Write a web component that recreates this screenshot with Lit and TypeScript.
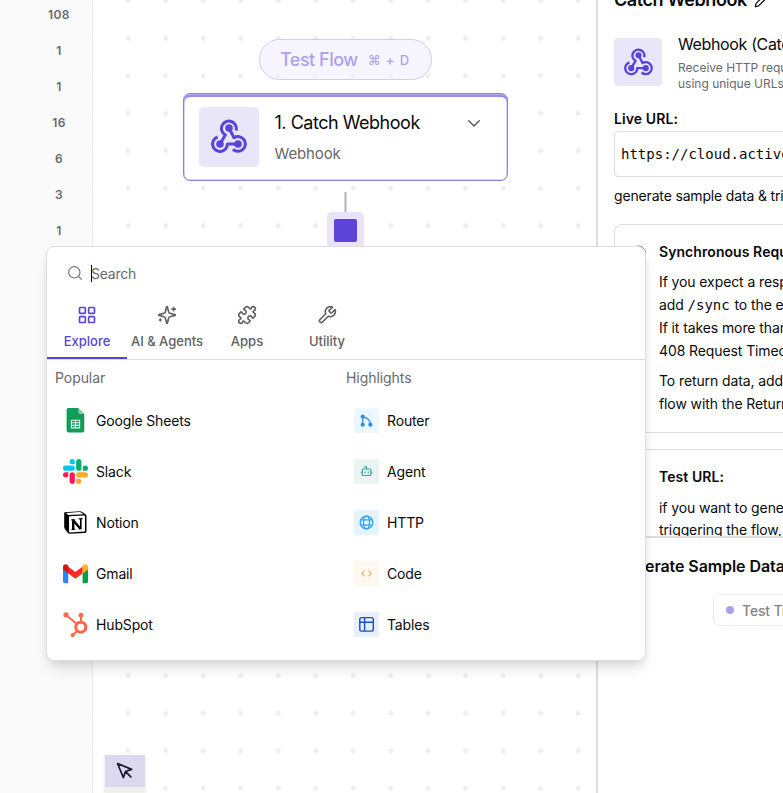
import { LitElement, html, css, svg } from "lit";
import { customElement } from "lit/decorators.js";

const webhookMark = html`<svg class="webhook" viewBox="0 0 36 36" fill="none" stroke="#5c43d9" stroke-width="3">
  <path d="M9 25L14.3 15.9A7.4 7.4 0 1 1 25 11.5" stroke-linejoin="round" />
  <path d="M27 25H16.4A7.4 7.4 0 1 1 6.7 18" stroke-linejoin="round" />
  <path d="M18 9L23 18.7A7.4 7.4 0 1 1 21.9 30.4" stroke-linejoin="round" />
  <g fill="#5c43d9" stroke="none"><circle cx="18" cy="9" r="3.8" /><circle cx="9" cy="25" r="3.8" /><circle cx="27" cy="25" r="3.8" /></g>
</svg>`;

const line = (cls: string, body: unknown) => html`<svg class=${cls} viewBox="0 0 24 24" fill="none"
  stroke="currentColor" stroke-width="2" stroke-linecap="round" stroke-linejoin="round">${body}</svg>`;

const tabs = [
  { label: "Explore", active: true, icon: svg`<rect width="7" height="7" x="3" y="3" rx="1"/><rect width="7" height="7" x="14" y="3" rx="1"/><rect width="7" height="7" x="14" y="14" rx="1"/><rect width="7" height="7" x="3" y="14" rx="1"/>` },
  { label: "AI & Agents", active: false, icon: svg`<path d="M9.937 15.5A2 2 0 0 0 8.5 14.063l-6.135-1.582a.5.5 0 0 1 0-.962L8.5 9.936A2 2 0 0 0 9.937 8.5l1.582-6.135a.5.5 0 0 1 .963 0L14.063 8.5A2 2 0 0 0 15.5 9.937l6.135 1.581a.5.5 0 0 1 0 .964L15.5 14.063a2 2 0 0 0-1.437 1.437l-1.582 6.135a.5.5 0 0 1-.963 0z"/><path d="M20 3v4M22 5h-4M4 17v2M5 18H3"/>` },
  { label: "Apps", active: false, icon: svg`<path d="M15.39 4.39a1 1 0 0 0 1.68-.474 2.5 2.5 0 1 1 3.014 3.015 1 1 0 0 0-.474 1.68l1.683 1.682a2.414 2.414 0 0 1 0 3.414L19.61 15.39a1 1 0 0 1-1.68-.474 2.5 2.5 0 1 0-3.014 3.015 1 1 0 0 1 .474 1.68l-1.683 1.682a2.414 2.414 0 0 1-3.414 0L8.61 19.61a1 1 0 0 0-1.68.474 2.5 2.5 0 1 1-3.014-3.015 1 1 0 0 0 .474-1.68l-1.683-1.682a2.414 2.414 0 0 1 0-3.414L4.39 8.61a1 1 0 0 1 1.68.474 2.5 2.5 0 1 0 3.014-3.015 1 1 0 0 1-.474-1.68l1.683-1.682a2.414 2.414 0 0 1 3.414 0z"/>` },
  { label: "Utility", active: false, icon: svg`<path d="M14.7 6.3a1 1 0 0 0 0 1.4l1.6 1.6a1 1 0 0 0 1.4 0l3.77-3.77a6 6 0 0 1-7.94 7.94l-6.91 6.91a2.12 2.12 0 0 1-3-3l6.91-6.91a6 6 0 0 1 7.94-7.94l-3.76 3.76z"/>` },
];

const brand = (body: unknown) => html`<svg class="logo" viewBox="0 0 25 25">${body}</svg>`;

const popular = [
  { name: "Google Sheets", icon: brand(svg`<path fill="#0f9d58" d="M5.4 0h9.9l6 6v16.8a1.8 1.8 0 0 1-1.8 1.8H5.4a1.8 1.8 0 0 1-1.8-1.8V1.8A1.8 1.8 0 0 1 5.4 0z"/><path fill="#87ceac" d="M15.3 0l6 6h-4.2a1.8 1.8 0 0 1-1.8-1.8z"/><path fill="none" stroke="#f1f1f1" stroke-width="1.1" d="M8.4 12.3h8.2v7.6H8.4zM8.4 14.8h8.2M8.4 17.4h8.2M12.5 12.3v7.6"/>`) },
  { name: "Slack", icon: brand(svg`<g transform="scale(1.0417)"><path fill="#ff1a55" d="M5.042 15.165a2.528 2.528 0 0 1-2.52 2.523A2.528 2.528 0 0 1 0 15.165a2.527 2.527 0 0 1 2.522-2.52h2.52zM6.313 15.165a2.527 2.527 0 0 1 2.521-2.52 2.527 2.527 0 0 1 2.521 2.52v6.313A2.528 2.528 0 0 1 8.834 24a2.528 2.528 0 0 1-2.521-2.522z"/><path fill="#0fc3f3" d="M8.834 5.042a2.528 2.528 0 0 1-2.521-2.52A2.528 2.528 0 0 1 8.834 0a2.528 2.528 0 0 1 2.521 2.522v2.52zM8.834 6.313a2.528 2.528 0 0 1 2.521 2.521 2.528 2.528 0 0 1-2.521 2.521H2.522A2.528 2.528 0 0 1 0 8.834a2.528 2.528 0 0 1 2.522-2.521z"/><path fill="#0aac70" d="M18.956 8.834a2.528 2.528 0 0 1 2.522-2.521A2.528 2.528 0 0 1 24 8.834a2.528 2.528 0 0 1-2.522 2.521h-2.522zM17.688 8.834a2.528 2.528 0 0 1-2.523 2.521 2.527 2.527 0 0 1-2.52-2.521V2.522A2.527 2.527 0 0 1 15.165 0a2.528 2.528 0 0 1 2.523 2.522z"/><path fill="#ffa726" d="M15.165 18.956a2.528 2.528 0 0 1 2.523 2.522A2.528 2.528 0 0 1 15.165 24a2.527 2.527 0 0 1-2.52-2.522v-2.522zM15.165 17.688a2.527 2.527 0 0 1-2.52-2.523 2.526 2.526 0 0 1 2.52-2.52h6.313A2.527 2.527 0 0 1 24 15.165a2.528 2.528 0 0 1-2.522 2.523z"/></g>`) },
  { name: "Notion", icon: brand(svg`<path fill="#000" d="M1.5 2.3L17 1.2q1.2 0 1.9.5l3.6 2.6q1 .7 1 1.7v15.2q0 1.6-1.5 1.7L6.7 23.8q-1.1 0-1.8-.8l-3-4q-.7-.8-.7-2V3.5q0-1 .3-1.2z"/><path fill="#fff" d="M3.3 3L16.6 2.1q1 0 1.5.4l2.4 1.7L6 5.1q-.8 0-1.4-.5zM6 7.2q0-.9.9-1L21 5.4q1 0 1 .9v14.4q0 .8-.9.9l-14 .8q-1 0-1-.9z"/><path fill="none" stroke="#000" stroke-width="2.4" d="M10.2 10.2v9.2M10 10.1l7.6 9"/><path fill="none" stroke="#000" stroke-width="1.6" d="M17.8 8.8v10.4"/><path stroke="#000" stroke-width="1.2" d="M8.3 9.9l3.3-.2M15.7 8.8l3.8-.2M8.5 19.5l3.6-.2"/>`) },
  { name: "Gmail", icon: brand(svg`<path fill="#2684fc" d="M0 8l5.2 4v10.2H1.7A1.7 1.7 0 0 1 0 20.5z"/><path fill="#00a046" d="M25 8l-5.4 4v10.2h3.7a1.7 1.7 0 0 0 1.7-1.7z"/><path fill="#ff2a26" d="M5 5.5l7.4 5.6 7.3-5.6v6.8l-7.3 5.5L5 12.3z"/><path fill="#d1171b" d="M0 8.5V5.8C0 3.4 2.7 2.4 4.3 3.8l1 .8v7.8z"/><path fill="#ffb41f" d="M25 8.5V5.8c0-2.4-2.7-3.4-4.3-2l-1.1.9v7.7z"/>`) },
  { name: "HubSpot", icon: brand(svg`<g fill="none" stroke="#ff6849"><circle cx="17.8" cy="15.2" r="5" stroke-width="3.1"/><path stroke-width="2" d="M18 10V4M14 12L3 3M14.5 18.5l-4.5 4.5"/></g><g fill="#ff6849"><circle cx="3" cy="2.8" r="2.6"/><circle cx="18" cy="3.2" r="2.4"/><circle cx="9.7" cy="23" r="2.1"/></g>`) },
];

const highlights = [
  { name: "Router", icon: brand(svg`<rect width="25" height="25" rx="2" fill="#ecf8ff"/><path d="M8.7 8.7v8M8.7 9.3c4 0 7.7 2.5 7.7 7.3" fill="none" stroke="#4a98f5" stroke-width="1.4"/><g fill="#3288f2"><circle cx="8.7" cy="8.6" r="2.1"/><circle cx="8.7" cy="16.7" r="2.1"/><circle cx="16.4" cy="16.7" r="2.1"/></g><path d="M14.5 7.2q3.5-.6 3.6 3" fill="none" stroke="#c5e2ff" stroke-width=".7" stroke-dasharray="1 1"/>`) },
  { name: "Agent", icon: brand(svg`<rect width="25" height="25" rx="1.5" fill="#eaf5f3"/><g transform="translate(6.1 5.7) scale(.54)" fill="none" stroke="#38aa99" stroke-width="2.2" stroke-linecap="round" stroke-linejoin="round"><path d="M12 8V4H8"/><rect width="16" height="12" x="4" y="8" rx="2"/><path d="M2 14h2M20 14h2M15 13v2M9 13v2"/></g>`) },
  { name: "HTTP", icon: brand(svg`<rect width="25" height="25" fill="#e6f4ff"/><g fill="none" stroke="#27a5fb" stroke-width="1.3"><circle cx="12.5" cy="12.5" r="6.3"/><ellipse cx="12.5" cy="12.5" rx="3" ry="6.3"/><path d="M7 9.8h11M7 15.2h11"/></g>`) },
  { name: "Code", icon: brand(svg`<rect width="25" height="25" rx="1.5" fill="#fef8ef"/><path d="M10.5 9.8l-2.7 2.7 2.7 2.7M14.5 9.8l2.7 2.7-2.7 2.7" fill="none" stroke="#e7b464" stroke-width="1.2"/>`) },
  { name: "Tables", icon: brand(svg`<rect width="25" height="25" rx="1" fill="#e9effa"/><g fill="none" stroke="#1c4fbf" stroke-width="1.45"><rect x="5.8" y="5.6" width="13.5" height="13.5" rx="1.8"/><path d="M10.6 5.6v13.5M5.8 10.3h13.5"/></g>`) },
];

const counts = ["108", "1", "1", "16", "6", "3", "1"];

@customElement("app-root")
export class AppRoot extends LitElement {
  static styles = css`
    :host { display: block; position: relative; width: 783px; height: 793px; overflow: hidden; background: #fff; font-family: Inter, sans-serif; color: #0a0a0a; font-size: 14px; letter-spacing: -.1px; }
    * { box-sizing: border-box; }
    svg { display: block; flex: none; }
    .frame { display: grid; grid-template-columns: 93px 503px 187px; height: 793px; }
    .rail { background: #fafafa; border-right: 1px solid #ececec; padding: 0 0 0 26px; display: flex; flex-direction: column; align-items: center; overflow: hidden; margin-top: -3px; }
    .count { height: 36px; line-height: 36px; font-size: 12px; font-weight: 600; color: #696969; letter-spacing: .4px; flex: none; }
    .canvas { background: radial-gradient(circle at 18.75px 18.75px, #eeeeee 2.1px, transparent 2.8px) 16.45px -18px / 37.5px 37.5px; display: flex; flex-direction: column; align-items: center; padding: 39px 0 0 2px; position: relative; }
    .pill { width: 173px; height: 41px; border: 1px solid #d3caf6; border-radius: 21px; background: rgba(241,238,255,.6); display: flex; align-items: center; padding-left: 20px; color: #ada0ec; font-weight: 500; font-size: 18px; letter-spacing: -.5px; gap: 10px; }
    .keys { font-size: 13px; letter-spacing: .9px; }
    .step { margin-top: 13px; width: 325px; height: 88px; border: 1px solid #8f7de4; border-radius: 7px; box-shadow: inset 0 1px 0 #b9adf1, inset 0 3px 0 #9a89e7, inset 0 0 0 .5px #b5a8f0; background: #fff; display: flex; padding: 13px 0 0 15px; flex: none; }
    .tile { background: #eae6fa; display: grid; place-items: center; flex: none; }
    .tile.big { width: 60px; height: 60px; border-radius: 5px; }
    .tile.big .webhook { width: 36px; height: 36px; }
    .words { margin-left: 15.5px; width: 190.5px; padding-top: 4px; }
    .name { font-size: 18px; line-height: 24px; letter-spacing: -.48px; }
    .kind { font-size: 15px; line-height: 20px; margin-top: 9px; color: #696969; letter-spacing: -.12px; }
    .chev { width: 18px; height: 18px; margin-top: 7px; color: #555; stroke-width: 1.8; }
    .wire { width: 2px; height: 20px; background: #b1b1b7; margin-top: 11px; transform: translateX(-.5px); }
    .slot { width: 37px; height: 37px; background: #e9e4fa; border-radius: 5px; display: grid; place-items: center; }
    .core { width: 23px; height: 23px; background: #5c43d9; border-radius: 2px; }
    .tools { position: absolute; left: 12px; bottom: 0; width: 40px; height: 38px; background: #f0f0f0; box-shadow: 0 1px 4px rgba(0,0,0,.12); }
    .pointer { height: 32px; background: #dcd8ee; display: grid; place-items: center; color: #1c1530; }
    .pointer svg { width: 20px; height: 20px; }
    .panel { border-left: 2px solid #dedede; overflow: hidden; display: flex; flex-direction: column; white-space: nowrap; background: #fff; }
    .info { height: 536px; overflow: hidden; padding-left: 16px; flex: none; width: 600px; }
    .head { display: flex; gap: 7px; align-items: center; font-size: 18px; font-weight: 600; line-height: 24px; letter-spacing: -.42px; margin-top: -12px; height: 24px; }
    .head svg { width: 15px; height: 15px; }
    .piece { display: flex; gap: 16px; margin-top: 26px; height: 48px; }
    .tile.mid { width: 48px; height: 48px; border-radius: 4px; }
    .tile.mid .webhook { width: 29px; height: 29px; }
    .ptitle { font-size: 16px; line-height: 20px; margin-top: -4px; letter-spacing: -.36px; }
    .pdesc { font-size: 12px; line-height: 16px; color: #696969; margin-top: 6px; letter-spacing: 0; }
    .live { font-weight: 600; line-height: 20px; margin-top: 23px; letter-spacing: .1px; }
    .url { height: 46px; width: 400px; border: 1px solid #dedede; border-radius: 4px; margin-top: 2px; padding-left: 6px; line-height: 45px; font-family: "DejaVu Sans Mono", monospace; font-size: 14px; letter-spacing: 0; }
    .note { line-height: 20px; margin-top: 9px; letter-spacing: -.16px; }
    .card { width: 400px; border: 1px solid #dedede; border-radius: 8px; display: flex; padding: 17px 0 0 15px; }
    .card.sync { height: 209px; margin-top: 18px; }
    .card.test { height: 200px; margin-top: 16px; }
    .card .ring { width: 16.4px; height: 17px; margin-top: 3px; margin-right: 12.6px; color: #444; stroke-width: 1.3; }
    .card b { display: block; font-weight: 600; line-height: 20px; letter-spacing: .07px; }
    .para { line-height: 23px; margin-top: 8px; }
    .para + .para { margin-top: 7px; }
    .test .para { margin-top: 9.5px; line-height: 22.5px; }
    .mono { font-family: "DejaVu Sans Mono", monospace; font-size: 14px; line-height: 1; letter-spacing: 0; margin-right: 1px; }
    .sample { border-top: 2px solid #dedede; flex: 1; padding-left: 16px; }
    .stitle { font-size: 16px; font-weight: 600; line-height: 20px; margin-top: 18px; letter-spacing: -.08px; }
    .test-btn { margin: 18px 0 0 99px; width: 160px; height: 32px; border: 1px solid #ececec; border-radius: 7px; display: flex; align-items: center; gap: 8px; padding-left: 12px; color: #858585; font-weight: 500; letter-spacing: -.15px; }
    .dot { width: 8px; height: 8px; border-radius: 50%; background: #ae9fec; }
    .popup { position: absolute; left: 46px; top: 246px; width: 600px; height: 415px; background: #fff; border: 1px solid #dedede; border-radius: 8px; box-shadow: 0 10px 15px -3px rgba(0,0,0,.11), 0 4px 8px -3px rgba(0,0,0,.12); }
    .search { display: flex; align-items: center; height: 54px; padding: 0 0 2px 20px; color: #737373; }
    .search svg { width: 16px; height: 16px; stroke-width: 1.7; margin-top: -1px; }
    .caret { width: 1px; height: 17px; background: #000; margin: 0 -1px 0 8px; }
    .hint { color: #696969; letter-spacing: -.22px; }
    .tabs { display: flex; border-bottom: 1px solid #dedede; height: 59px; }
    .tab { width: 80px; height: 58px; display: flex; flex-direction: column; align-items: center; gap: 8px; padding-top: 4px; font-size: 13px; font-weight: 500; line-height: 16px; letter-spacing: 0; color: #616161; white-space: nowrap; border-bottom: 2px solid transparent; }
    .tab.active { color: #5c43d9; border-color: #5c43d9; }
    .ticon { width: 20px; height: 20px; stroke-width: 2; }
    .lists { display: grid; grid-template-columns: 291px 291px; padding: 8px 0 0 8px; }
    .label { color: #696969; line-height: 20px; height: 27px; letter-spacing: -.06px; }
    .row { display: flex; align-items: center; gap: 8px; padding-left: 8px; height: 51px; letter-spacing: -.15px; }
    .logo { width: 25px; height: 25px; }
  `;

  render() {
    const column = (title: string, items: { name: string; icon: unknown }[]) => html`<div>
      <div class="label">${title}</div>
      ${items.map((i) => html`<div class="row">${i.icon}<span>${i.name}</span></div>`)}
    </div>`;
    return html`
      <div class="frame">
        <div class="rail">${counts.map((c) => html`<div class="count">${c}</div>`)}</div>
        <div class="canvas">
          <div class="pill"><span>Test Flow</span><span class="keys">⌘ + D</span></div>
          <div class="step">
            <div class="tile big">${webhookMark}</div>
            <div class="words"><div class="name">1. Catch Webhook</div><div class="kind">Webhook</div></div>
            ${line("chev", svg`<path d="m5 9 7 7 7-7"/>`)}
          </div>
          <div class="wire"></div>
          <div class="slot"><div class="core"></div></div>
          <div class="tools"><div class="pointer">${line("", svg`<path d="m3 3 7.07 16.97 2.51-7.39 7.39-2.51L3 3zM13 13l6 6"/>`)}</div></div>
        </div>
        <div class="panel">
          <div class="info">
            <div class="head">Catch Webhook ${line("", svg`<path d="M21.174 6.812a1 1 0 0 0-3.986-3.987L3.842 16.174a2 2 0 0 0-.5.83l-1.321 4.352a.5.5 0 0 0 .623.622l4.353-1.32a2 2 0 0 0 .83-.497zM15 5l4 4"/>`)}</div>
            <div class="piece">
              <div class="tile mid">${webhookMark}</div>
              <div><div class="ptitle">Webhook (Catch Webhook)</div><div class="pdesc">Receive HTTP requests and trigger flows<br />using unique URLs.</div></div>
            </div>
            <div class="live">Live URL:</div>
            <div class="url">https://cloud.activepieces.com</div>
            <div class="note">generate sample data &amp; triggers</div>
            <div class="card sync">
              ${line("ring", svg`<circle cx="12" cy="12" r="11"/>`)}
              <div><b>Synchronous Requests:</b>
                <div class="para">If you expect a response from this webhook,<br />add <span class="mono">/sync</span> to the end of the URL.<br />If it takes more than 30 seconds, it will return a<br />408 Request Timeout.</div>
                <div class="para">To return data, add an action to your<br />flow with the Return Response.</div></div>
            </div>
            <div class="card test">
              ${line("ring", svg`<circle cx="12" cy="12" r="11"/>`)}
              <div><b>Test URL:</b>
                <div class="para">if you want to generate sample data without<br />triggering the flow, append it.</div></div>
            </div>
          </div>
          <div class="sample">
            <div class="stitle">Generate Sample Data</div>
            <div class="test-btn"><span class="dot"></span>Test Trigger</div>
          </div>
        </div>
      </div>
      <div class="popup">
        <div class="search">${line("", svg`<circle cx="11" cy="11" r="8.5"/><path d="m21.5 21.5-4.3-4.3"/>`)}<span class="caret"></span><span class="hint">Search</span></div>
        <div class="tabs">${tabs.map((t) => html`<div class="tab ${t.active ? "active" : ""}">${line("ticon", t.icon)}<span>${t.label}</span></div>`)}</div>
        <div class="lists">${column("Popular", popular)}${column("Highlights", highlights)}</div>
      </div>
    `;
  }
}
